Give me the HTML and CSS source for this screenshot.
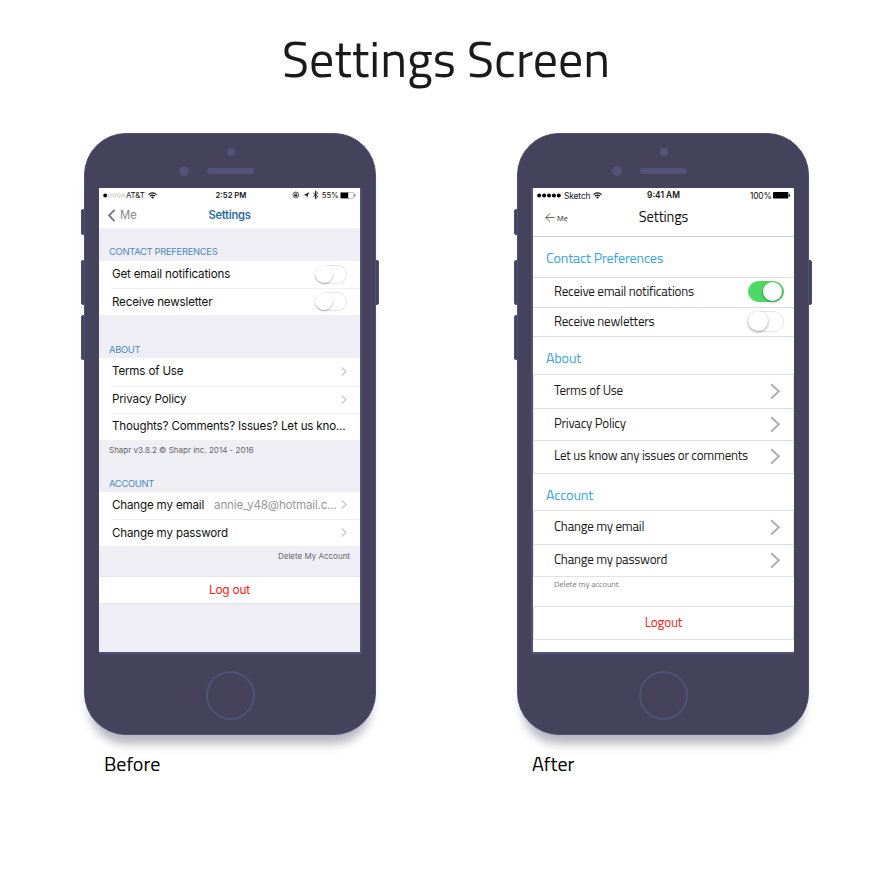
FILE: index.html
```html
<!DOCTYPE html>
<html lang="en">
<head>
<meta charset="utf-8">
<title>Settings Screen</title>
<link rel="stylesheet" href="styles.css">
</head>
<body>
<svg width="0" height="0" class="defs">
  <symbol id="wifi" viewBox="0 0 18 14"><path d="M1 5.2a11.3 11.3 0 0 1 16 0M4 8.4a7 7 0 0 1 10 0" fill="none" stroke="#111" stroke-width="2.3"/><path d="M6.2 10.6a4 4 0 0 1 5.6 0L9 13.5z" fill="#111"/></symbol>
  <symbol id="top" viewBox="0 0 292 55"><circle cx="147" cy="19" r="4.2"/><circle cx="100" cy="38" r="5"/><rect x="123" y="35" width="47" height="6" rx="3"/></symbol>
  <symbol id="thin" viewBox="0 0 6 9"><path d="M.8.5 5 4.5.8 8.5" fill="none" stroke="#c4c4c8" stroke-width="1.1"/></symbol>
  <symbol id="thick" viewBox="0 0 11 17"><path d="M1.2 1.2 8.8 8.3 1.2 15.6" fill="none" stroke="#b0b0b0" stroke-width="2.1"/></symbol>
</svg>
<h1>Settings Screen</h1>
<main>
  <figure class="before">
    <div class="phone">
      <i class="key mute"></i><i class="key up"></i><i class="key down"></i><i class="key power"></i>
      <svg class="top"><use href="#top"/></svg>
      <div class="screen">
        <div class="status">
          <svg class="signal" width="22" height="5"><circle cx="2.2" cy="2.5" r="1.9"/><g fill="none" stroke="#aaa" stroke-width=".6"><circle cx="6.8" cy="2.5" r="1.6"/><circle cx="11.2" cy="2.5" r="1.6"/><circle cx="15.6" cy="2.5" r="1.6"/><circle cx="20" cy="2.5" r="1.6"/></g></svg>
          <span class="carrier">AT&amp;T</span><svg class="wifi"><use href="#wifi"/></svg>
          <b>2:52 PM</b>
          <span class="right">
            <svg width="28" height="10" viewBox="0 0 28 10"><circle cx="3.8" cy="4.9" r="2.9" fill="none" stroke="#222" stroke-width=".7"/><rect x="2.3" y="4.4" width="3" height="2.1" fill="#222"/><path d="M2.9 4.5V3.8a.9.9 0 0 1 1.8 0v.7" fill="none" stroke="#222" stroke-width=".6"/><path d="M11.3 5.2 17 2.2 15 7.8 14.3 5.3z" fill="#111"/><path d="M21.3 3 25.7 6.7 23.5 8.8V1.1l2.2 2L21.3 6.9" fill="none" stroke="#111" stroke-width=".9"/></svg>
            <span class="pct">55%</span>
            <svg width="16" height="7"><rect x=".4" y=".4" width="13.4" height="6" rx="1" fill="#fff" stroke="#888" stroke-width=".6"/><rect x=".6" y=".6" width="7.6" height="5.6"/><rect x="14.4" y="2.4" width="1" height="2" fill="#444"/></svg>
          </span>
        </div>
        <div class="nav">
          <a><svg width="9" height="13" viewBox="0 0 9 13"><path d="M7.5.8 2 6.5l5.5 5.7" fill="none" stroke="#777" stroke-width="1.9"/></svg><span>Me</span></a>
          <strong>Settings</strong>
        </div>
        <h2 class="s-contact">CONTACT PREFERENCES</h2>
        <ul>
          <li><span>Get email notifications</span><i class="switch"></i></li>
          <li><span>Receive newsletter</span><i class="switch"></i></li>
        </ul>
        <h2 class="s-about">ABOUT</h2>
        <ul>
          <li><span>Terms of Use</span><svg class="chev"><use href="#thin"/></svg></li>
          <li><span>Privacy Policy</span><svg class="chev"><use href="#thin"/></svg></li>
          <li><span>Thoughts? Comments? Issues? Let us kno...</span></li>
        </ul>
        <p>Shapr v3.8.2 © Shapr inc. 2014 - 2016</p>
        <h2 class="s-account">ACCOUNT</h2>
        <ul>
          <li><span>Change my email</span><em>annie_y48@hotmail.c...</em><svg class="chev"><use href="#thin"/></svg></li>
          <li><span>Change my password</span><svg class="chev"><use href="#thin"/></svg></li>
        </ul>
        <p class="delete">Delete My Account</p>
        <div class="logout">Log out</div>
      </div>
      <i class="home"></i>
    </div>
    <figcaption>Before</figcaption>
  </figure>
  <figure class="after">
    <div class="phone">
      <i class="key mute"></i><i class="key up"></i><i class="key down"></i><i class="key power"></i>
      <svg class="top"><use href="#top"/></svg>
      <div class="screen">
        <div class="status">
          <svg class="signal" width="24" height="5"><circle cx="2.2" cy="2.5" r="2"/><circle cx="7.1" cy="2.5" r="2"/><circle cx="12" cy="2.5" r="2"/><circle cx="16.9" cy="2.5" r="2"/><circle cx="21.8" cy="2.5" r="2"/></svg>
          <span class="carrier">Sketch</span><svg class="wifi"><use href="#wifi"/></svg>
          <b>9:41 AM</b>
          <span class="right">
            <span class="pct">100%</span>
            <svg width="17" height="7"><rect width="15.4" height="6.6" rx="1"/><rect x="15.8" y="2.2" width="1.2" height="2.2" rx=".5"/></svg>
          </span>
        </div>
        <div class="nav">
          <a><svg width="10" height="9" viewBox="0 0 10 9"><path d="M9.5 4.5H.8M5 .5.8 4.5 5 8.5" fill="none" stroke="#444" stroke-width=".8"/></svg><span>Me</span></a>
          <strong>Settings</strong>
        </div>
        <h2 class="s-contact">Contact Preferences</h2>
        <ul class="contact">
          <li><span>Receive email notifications</span><i class="switch on"></i></li>
          <li><span>Receive newletters</span><i class="switch"></i></li>
        </ul>
        <h2 class="s-about">About</h2>
        <ul class="boxed">
          <li><span>Terms of Use</span><svg class="chev"><use href="#thick"/></svg></li>
          <li><span>Privacy Policy</span><svg class="chev"><use href="#thick"/></svg></li>
          <li><span>Let us know any issues or comments</span><svg class="chev"><use href="#thick"/></svg></li>
        </ul>
        <h2 class="s-account">Account</h2>
        <ul class="boxed">
          <li><span>Change my email</span><svg class="chev"><use href="#thick"/></svg></li>
          <li><span>Change my password</span><svg class="chev"><use href="#thick"/></svg></li>
        </ul>
        <p class="delete">Delete my account</p>
        <div class="logout">Logout</div>
      </div>
      <i class="home"></i>
    </div>
    <figcaption>After</figcaption>
  </figure>
</main>
</body>
</html>
```
FILE: styles.css
```css
* { box-sizing: border-box; margin: 0; padding: 0; }
body { width: 892px; height: 871px; background: #fff; color: #111; font-family: "Titillium Web", "Open Sans", sans-serif; overflow: hidden; }
svg { display: block; flex: none; }
.defs { position: absolute; }
ul { list-style: none; }
span { white-space: nowrap; }
h1 { height: 133px; padding-top: 23px; text-align: center; font-size: 50px; line-height: 70px; font-weight: 400; color: #1a1a1a; }
main { display: flex; gap: 141px; padding-left: 84px; }

.phone { position: relative; width: 292px; height: 602px; background: #44435b; border-radius: 42px; border: 1px solid #50517a; box-shadow: 0 14px 10px -5px rgba(68, 67, 92, .38); }
.phone::before { content: ""; position: absolute; inset: 0; border-radius: 41px; background: #44435b; }
.phone > * { position: relative; }
.phone > .key { position: absolute; width: 4px; background: #44435b; border: 1px solid #50517a; left: -4px; border-radius: 2px 0 0 2px; }
.phone > .mute { top: 75px; height: 26px; }
.phone > .up, .phone > .power { top: 126px; height: 45px; }
.phone > .down { top: 181px; height: 45px; }
.phone > .power { left: auto; right: -4px; border-radius: 0 2px 2px 0; }
.top { width: 292px; height: 55px; margin: -1px 0 0 -1px; fill: #525379; }
.screen { width: 261px; height: 464px; margin-left: 14px; overflow: hidden; background: #fff; display: flex; flex-direction: column; box-shadow: 1px 1px 0 1px #50527a; }
.after .screen { margin-left: 15px; box-shadow: -1px 1px 0 1px #50527a; }
.home { display: block; width: 49px; height: 49px; border: 2px solid #50527a; border-radius: 50%; margin: 19px 0 0 121px; }
figcaption { height: 40px; line-height: 40px; padding-left: 20px; margin-top: 9px; font-size: 20px; color: #000; }
.after figcaption { padding-left: 15px; }

.status { position: relative; display: flex; align-items: center; height: 14px; flex: none; font: 7.8px/14px Inter, sans-serif; }
.status b { position: absolute; left: 0; right: 0; text-align: center; font-weight: 600; font-size: 7.7px; padding-left: 3px; top: .5px; }
.signal { margin: 0 1px 0 4px; }
.wifi { width: 9px; height: 7px; margin-left: 3px; }
.right { display: flex; align-items: center; gap: 1.5px; margin-left: auto; padding-right: 4px; }
.carrier { letter-spacing: -.1px; }
.pct { letter-spacing: -.15px; }

.nav { position: relative; display: flex; align-items: center; flex: none; }
.nav a { display: flex; align-items: center; }
.nav strong { position: absolute; left: 0; right: 0; text-align: center; }
h2 { flex: none; font-weight: 400; }
li { position: relative; display: flex; align-items: center; }
.chev { margin-left: auto; }
.switch { display: block; position: relative; margin-left: auto; border: 1.3px solid #e3e3e3; border-radius: 20px; background: #fff; }
.switch::after { content: ""; position: absolute; border-radius: 50%; background: #fff; }

.before .screen { background: #efeef4; font-family: Inter, sans-serif; }
.before .status { background: #fff; }
.before .nav { height: 27px; background: #fff; padding-left: 8px; border-bottom: 1px solid #f4f4f7; }
.before .nav a { color: #888; font-size: 11.3px; gap: 4px; }
.before .nav strong { font-size: 11.2px; font-weight: 600; letter-spacing: -.3px; color: #2c6fa8; }
.before h2 { padding-left: 10px; font-size: 9.4px; line-height: 12px; letter-spacing: -.3px; color: #4a8abf; }
.before .s-contact { height: 32px; padding-top: 17px; }
.before .s-about { height: 43px; padding-top: 28.5px; }
.before .s-account { height: 31.5px; padding-top: 17.5px; }
.before ul { background: #fff; flex: none; }
.before li { height: 27.2px; margin-left: 13px; padding: 0 13px 1px 0; font-size: 11.6px; letter-spacing: -.17px; color: #111; }
.before li + li { border-top: 1px solid #f0f0f2; }
.before .chev { width: 6px; height: 9px; }
.before em { font-style: normal; color: #98989c; margin-left: 10px; }
.before p { height: 20.4px; padding: 4.4px 10px 0; font-size: 8px; line-height: 12px; color: #66666a; flex: none; }
.before .delete { height: 30px; text-align: right; padding-top: 4px; }
.before .logout { height: 28px; border: solid #e5e5e8; border-width: 1px 0; background: #fff; text-align: center; font-size: 11.8px; letter-spacing: -.15px; line-height: 26px; color: #ff1414; flex: none; }
.before .switch { width: 32px; height: 19px; }
.before .switch::after { width: 18px; height: 18px; left: -1px; top: -1px; box-shadow: 0 1px 2px rgba(0, 0, 0, .3); }

.after .status { height: 15px; font-size: 8.4px; }
.after .status b { font-size: 8.4px; padding: 0; top: 0; }
.after .signal { margin-right: 3px; }
.after .nav { height: 34px; padding: 0 0 4px 12px; border-bottom: 1px solid #d2d2d4; }
.after .nav a { font-size: 8px; gap: 2px; color: #333; }
.after .nav strong { font-size: 14.5px; letter-spacing: -.15px; line-height: 20px; top: 4px; font-weight: 400; }
.after h2 { padding-left: 13px; font-size: 14.2px; letter-spacing: -.17px; line-height: 20px; color: #36a6de; }
.after .s-contact { height: 40px; padding-top: 11px; }
.after .s-about { height: 37px; padding-top: 11px; }
.after .s-account { height: 36.5px; padding-top: 11px; }
.after li { padding: 0 10px 2px 21px; font-size: 13px; letter-spacing: -.21px; color: #1a1a1a; }
.contact { border-top: 1.5px solid #dedede; flex: none; }
.contact li { height: 29.5px; border-bottom: 1px solid #dcdcdc; }
.contact .switch { top: 1px; }
.contact .switch.on { top: 0; }
.boxed { border: 1px solid #e2e2e2; flex: none; }
.after .boxed li { height: 32.6px; padding: 0 12px 3px 20px; }
.boxed li + li { border-top: 1px solid #dcdcdc; }
.boxed .chev { width: 11px; height: 17px; position: relative; top: 1.5px; }
.after .switch { width: 36px; height: 21px; }
.after .switch::after { width: 20px; height: 20px; left: -1px; top: -1px; box-shadow: 0 1px 3px rgba(0, 0, 0, .4); }
.after .switch.on { background: #4cd964; border-color: #4cd964; }
.after .switch.on::after { width: 19px; height: 19px; left: 14px; top: 0; }
.after .delete { height: 29px; padding-left: 21px; font-size: 8.3px; line-height: 14px; color: #777; }
.after .logout { height: 33.5px; border: 1px solid #e0e0e0; text-align: center; font-size: 13.2px; letter-spacing: -.2px; line-height: 30px; color: #ff1a1a; flex: none; }
```
